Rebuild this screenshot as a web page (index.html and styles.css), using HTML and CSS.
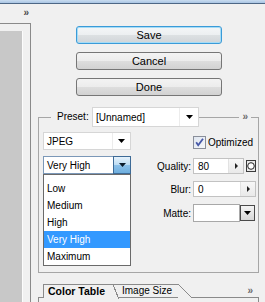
FILE: index.html
```html
<!DOCTYPE html>
<html>
<head>
<meta charset="utf-8">
<link rel="stylesheet" href="styles.css">
</head>
<body>
<div class="topbar"></div>
<div class="main">
  <div class="left">
    <div class="chev">»</div>
    <div class="frame"><div class="well"></div></div>
  </div>
  <div class="right">
    <div class="buttons">
      <div class="btn default">Save</div>
      <div class="btn">Cancel</div>
      <div class="btn">Done</div>
    </div>
    <div class="group">
      <div class="group-head">
        <span class="legend">Preset:</span>
        <div class="combo preset">
          <span class="val">[Unnamed]</span>
          <span class="arrow"><svg width="7" height="4" viewBox="0 0 7 4"><path d="M0 0h7L3.5 4z" fill="#000"/></svg></span>
        </div>
        <span class="spacer"></span>
        <span class="chev2">»</span>
      </div>
      <div class="group-body">
        <div class="col-left">
          <div class="combo fmt">
            <span class="val">JPEG</span>
            <span class="arrow"><svg width="7" height="4" viewBox="0 0 7 4"><path d="M0 0h7L3.5 4z" fill="#000"/></svg></span>
          </div>
          <div class="qwrap">
            <div class="combo open">
              <span class="val">Very High</span>
              <span class="arrow"><svg width="7" height="4" viewBox="0 0 7 4"><path d="M0 0h7L3.5 4z" fill="#0a1a2a"/></svg></span>
            </div>
            <ul class="menu">
              <li>Low</li>
              <li>Medium</li>
              <li>High</li>
              <li class="sel">Very High</li>
              <li>Maximum</li>
            </ul>
          </div>
        </div>
        <div class="col-right">
          <div class="row opt">
            <svg class="check" width="13" height="13" viewBox="0 0 13 13"><defs><linearGradient id="cg" x1="0" y1="0" x2="1" y2="1"><stop offset="0" stop-color="#dfe6f0"/><stop offset="1" stop-color="#f6f8fb"/></linearGradient></defs><rect x="0.5" y="0.5" width="12" height="12" fill="url(#cg)" stroke="#8a8f9a"/><path d="M3.2 6.3l2 3L10 2.8" fill="none" stroke="#4658a8" stroke-width="1.8"/></svg>
            <span class="opt-label">Optimized</span>
          </div>
          <div class="row q">
            <span class="lbl">Quality:</span>
            <div class="spin w51"><span class="val">80</span><span class="sarrow"><svg width="3" height="6" viewBox="0 0 3 6"><path d="M0 0l3 3-3 3z" fill="#222"/></svg></span></div>
            <span class="cbtn"><svg width="8" height="8" viewBox="0 0 8 8"><circle cx="4" cy="4" r="3.3" fill="#fff" stroke="#222" stroke-width="1"/></svg></span>
          </div>
          <div class="row b">
            <span class="lbl">Blur:</span>
            <div class="spin w63"><span class="val">0</span><span class="sarrow"><svg width="3" height="6" viewBox="0 0 3 6"><path d="M0 0l3 3-3 3z" fill="#222"/></svg></span></div>
          </div>
          <div class="row m">
            <span class="lbl">Matte:</span>
            <div class="matte"></div>
            <span class="mbtn"><svg width="7" height="4" viewBox="0 0 7 4"><path d="M0 0h7L3.5 4z" fill="#000"/></svg></span>
          </div>
        </div>
      </div>
    </div>
    <div class="tabs">
      <div class="tabstrip">
        <div class="tab active">Color Table</div>
        <div class="tab inactive">Image Size</div>
        <span class="tabchev">»</span>
      </div>
      <div class="tabpanel"></div>
    </div>
  </div>
</div>
</body>
</html>
```
FILE: styles.css
```css
html, body {
  margin: 0;
  padding: 0;
}
body {
  width: 265px;
  height: 302px;
  overflow: hidden;
  background: #f0f0f0;
  font-family: "Liberation Sans", Arial, sans-serif;
  font-size: 10px;
  color: #000;
}
.topbar {
  height: 3px;
  background: linear-gradient(#c9dcf0, #a9c5e3);
  border-bottom: 1px solid #4d6785;
}
.main {
  display: flex;
  height: 298px;
}
.left {
  width: 31px;
  flex: none;
}
.chev {
  height: 19px;
  box-sizing: border-box;
  padding-right: 2px;
  text-align: right;
  font-weight: bold;
  font-size: 10px;
  line-height: 17px;
  color: #4a4a4a;
}
.frame {
  height: 279px;
  box-sizing: border-box;
  border-top: 1px solid #8a8a8a;
  border-right: 1px solid #8a8a8a;
  padding-top: 7px;
}
.well {
  width: 22px;
  height: 100%;
  background: #c8c8c8;
  border-right: 1px solid #fcfcfc;
}
.right {
  flex: 1;
  padding-left: 7px;
}
.buttons {
  margin: 22px 0 0 38px;
  width: 146px;
  display: flex;
  flex-direction: column;
  gap: 8px;
}
.btn {
  height: 18px;
  box-sizing: border-box;
  border: 1px solid #767676;
  border-radius: 3px;
  background: linear-gradient(#f3f3f3, #ececec 50%, #dedede 50%, #d2d2d2);
  text-align: center;
  font-size: 11px;
  line-height: 16px;
}
.btn.default {
  border-color: #3a9bd8;
  box-shadow: inset 0 0 0 1px #a6dcf6;
  background: linear-gradient(#f4f6f7, #eceff1 50%, #dde1e3 50%, #d0d5d8);
}
.group {
  margin-top: 21px;
  width: 221px;
  height: 156px;
  box-sizing: border-box;
  border: 1px solid #a6a6a6;
}
.group-head {
  display: flex;
  align-items: center;
  height: 20px;
  margin-top: -11px;
  padding-left: 12px;
}
.legend {
  width: 41px;
  box-sizing: border-box;
  padding-left: 6px;
  background: #f0f0f0;
  line-height: 14px;
}
.combo {
  display: flex;
  box-sizing: border-box;
  border: 1px solid #d6d6d6;
  background: #fff;
}
.combo .val {
  flex: 1;
  padding-left: 3px;
  display: flex;
  align-items: center;
}
.combo .arrow {
  width: 17px;
  display: flex;
  align-items: center;
  justify-content: center;
  border-left: 1px solid #ececec;
}
.combo.preset {
  width: 107px;
  height: 20px;
}
.combo.preset .arrow {
  width: 18px;
}
.spacer {
  flex: 1;
}
.chev2 {
  background: #f0f0f0;
  padding: 0 3px;
  margin-right: 7px;
  font-weight: bold;
  color: #6a6a6a;
  line-height: 12px;
}
.group-body {
  display: flex;
}
.col-left {
  width: 88px;
  margin-left: 4px;
  padding-top: 5px;
  display: flex;
  flex-direction: column;
  gap: 6px;
}
.combo.fmt {
  height: 18px;
}
.qwrap {
  position: relative;
}
.combo.open {
  height: 18px;
  border-color: #7b98b8;
}
.combo.open .arrow {
  width: 16px;
  margin: -1px -1px -1px 0;
  border: 1px solid #3d6a96;
  background: linear-gradient(#e6f2fb, #bcdcf3 50%, #8cc1e9 51%, #6eaede);
}
.menu {
  position: absolute;
  top: 100%;
  left: 0;
  z-index: 5;
  width: 88px;
  box-sizing: border-box;
  margin: 0;
  padding: 5px 0 0;
  list-style: none;
  background: #fff;
  border: 1px solid #6a6a6a;
}
.menu li {
  height: 17px;
  line-height: 17px;
  padding-left: 3px;
}
.menu li.sel {
  background: #3399ff;
  color: #fff;
}
.col-right {
  flex: 1;
  padding-top: 9px;
  display: flex;
  flex-direction: column;
}
.row {
  display: flex;
  align-items: center;
}
.row.opt {
  height: 13px;
  padding-left: 62px;
}
.opt-label {
  margin-left: 2px;
}
.lbl {
  width: 60px;
  margin-right: 2px;
  text-align: right;
}
.row.q {
  margin-top: 9px;
  height: 16px;
}
.row.b {
  margin-top: 7px;
  height: 16px;
}
.row.m {
  margin-top: 7px;
  height: 18px;
}
.spin {
  display: flex;
  height: 16px;
  box-sizing: border-box;
  border: 1px solid #c2c2c2;
  background: #fff;
}
.spin.w51 {
  width: 51px;
}
.spin.w63 {
  width: 63px;
}
.spin .val {
  flex: 1;
  padding-left: 4px;
  display: flex;
  align-items: center;
}
.sarrow {
  width: 14px;
  display: flex;
  align-items: center;
  justify-content: center;
  background: linear-gradient(#f7f7f7, #e9e9e9);
  border-left: 1px solid #e2e2e2;
}
.cbtn {
  margin-left: 2px;
  width: 10px;
  height: 12px;
  box-sizing: border-box;
  border: 1px solid #3a3a3a;
  background: #e8e8e8;
  display: flex;
  align-items: center;
  justify-content: center;
}
.matte {
  width: 47px;
  height: 18px;
  box-sizing: border-box;
  border: 1px solid #a8a8a8;
  background: #fff;
}
.mbtn {
  width: 15px;
  height: 16px;
  box-sizing: border-box;
  border: 1px solid #4a4a4a;
  background: linear-gradient(#f4f4f4, #d6d6d6);
  display: flex;
  align-items: center;
  justify-content: center;
}
.tabs {
  margin-top: 11px;
  width: 221px;
}
.tabstrip {
  position: relative;
  z-index: 2;
  display: flex;
  align-items: flex-end;
  height: 13px;
  padding-left: 5px;
}
.tab {
  position: relative;
  box-sizing: border-box;
  border-top: 1px solid #8a8a8a;
  background: #f0f0f0;
  line-height: 12px;
}
.tab::after {
  content: "";
  position: absolute;
  top: -1px;
  left: 100%;
  height: 14px;
}
.tab.active {
  z-index: 2;
  width: 70px;
  height: 14px;
  margin-bottom: -1px;
  border-left: 1px solid #8a8a8a;
  padding-left: 4px;
  font-weight: bold;
  font-size: 10.5px;
}
.tab.active::after {
  width: 6px;
  height: 15px;
  background: linear-gradient(to top right, #f0f0f0 calc(50% - 0.7px), #8a8a8a calc(50% - 0.7px), #8a8a8a calc(50% + 0.3px), transparent calc(50% + 0.3px));
}
.tab.inactive {
  z-index: 1;
  width: 65px;
  height: 13px;
  padding-left: 9px;
}
.tab.inactive::after {
  width: 14px;
  background: linear-gradient(to top right, #f0f0f0 calc(50% - 0.7px), #8a8a8a calc(50% - 0.7px), #8a8a8a calc(50% + 0.3px), transparent calc(50% + 0.3px));
}
.tabchev {
  margin-left: auto;
  margin-right: 6px;
  align-self: center;
  font-weight: bold;
  color: #6a6a6a;
  line-height: 10px;
}
.tabpanel {
  height: 4px;
  border: 1px solid #8a8a8a;
  border-bottom: none;
}
```
